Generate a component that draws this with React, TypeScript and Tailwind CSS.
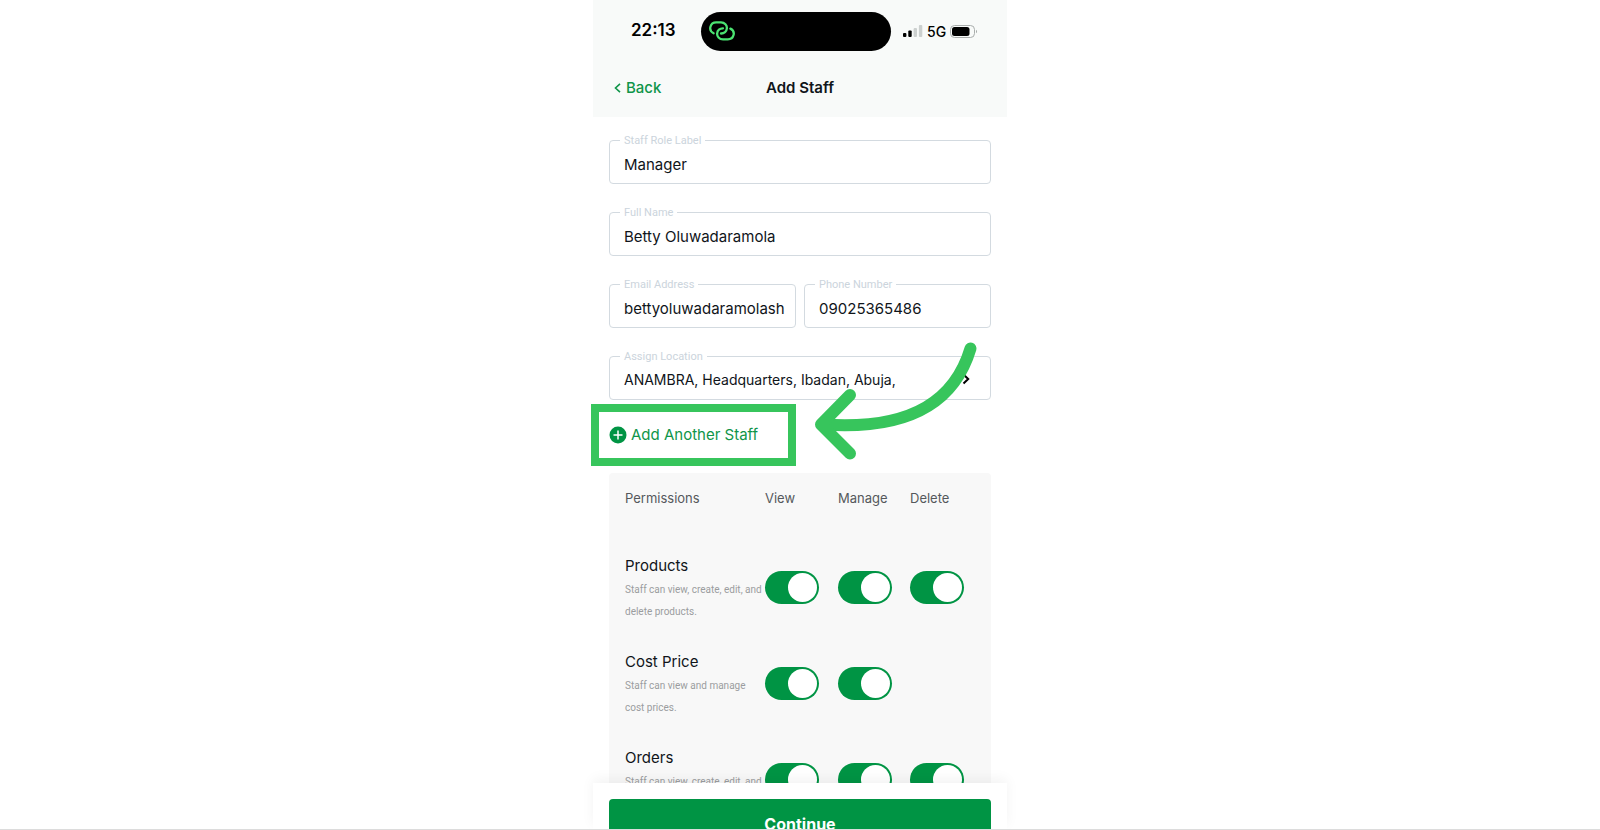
import { useState } from "react";

type Action = "View" | "Manage" | "Delete";

const ACTIONS: Action[] = ["View", "Manage", "Delete"];

const PERMISSIONS: { name: string; lines: string[]; actions: Action[] }[] = [
  { name: "Products", lines: ["Staff can view, create, edit, and", "delete products."], actions: ["View", "Manage", "Delete"] },
  { name: "Cost Price", lines: ["Staff can view and manage", "cost prices."], actions: ["View", "Manage"] },
  { name: "Orders", lines: ["Staff can view, create, edit, and"], actions: ["View", "Manage", "Delete"] },
];

const floatingLabel =
  "absolute -top-2 left-[11px] bg-white px-1 font-['Roboto','Liberation_Sans',sans-serif] text-[11px] leading-[18px] text-[#cbd4dc]";

function Field({ id, label, value, type = "text" }: { id: string; label: string; value: string; type?: string }) {
  return (
    <div className="relative min-w-0 flex-1">
      <label htmlFor={id} className={floatingLabel}>
        {label}
      </label>
      <input
        id={id}
        type={type}
        defaultValue={value}
        className="block h-11 w-full rounded border border-[#d3dae0] bg-white pt-1 pr-2 pl-[14px] text-[15px] text-[#10151a] outline-none"
      />
    </div>
  );
}

function Toggle({ label }: { label: string }) {
  const [on, setOn] = useState(true);
  return (
    <label className="relative block h-[33px] w-[54px]">
      <input
        type="checkbox"
        role="switch"
        aria-label={label}
        checked={on}
        onChange={() => setOn(!on)}
        className="peer block h-full w-full appearance-none rounded-full bg-gray-300 checked:bg-[#009444]"
      />
      <span className="pointer-events-none absolute top-[2px] left-[2px] size-[29px] rounded-full bg-white peer-checked:left-[23px]" />
    </label>
  );
}

function StatusBar() {
  return (
    <div className="flex h-[62px] items-center">
      <div className="w-[108px] pl-[38px] text-[17px] font-semibold text-black">22:13</div>
      <div className="flex h-[39px] w-[190px] items-center rounded-full bg-black pl-2">
        <svg viewBox="0 0 26 22" className="h-[22px] w-[26px]" fill="none" stroke="#4be371" strokeWidth="2.300" strokeLinecap="round">
          <path d="M4.600 13.200A6 5.700 0 0 1 7.400 2.400h4.600a6 5.400 0 0 1 5.800 6.200 5.600 5 0 0 1-5.800 4.900" />
          <path d="M21.400 8.600a6 5.700 0 0 1-2.800 10.800h-4.600a6 5.400 0 0 1-5.800-6.200 5.600 5 0 0 1 5.800-4.900" />
        </svg>
      </div>
      <div className="flex items-center gap-1 pl-3">
        <svg viewBox="0 0 20 13" className="h-[13px] w-5">
          <rect x="0" y="8" width="3.400" height="4" rx="1" fill="#000" />
          <rect x="5.300" y="5.500" width="3.400" height="6.500" rx="1" fill="#000" />
          <rect x="10.600" y="3" width="3.400" height="9" rx="1" fill="#ccd0cf" />
          <rect x="15.900" y="0" width="3.400" height="12" rx="1" fill="#ccd0cf" />
        </svg>
        <span className="text-[14px] font-medium text-black">5G</span>
        <svg viewBox="0 0 28 13" className="h-[13px] w-7">
          <rect x=".5" y=".5" width="24" height="12" rx="4" fill="none" stroke="#a9adac" />
          <rect x="2" y="2" width="17.500" height="9" rx="2.500" fill="#000" />
          <path d="M26 4.700c1.400.6 1.400 3 0 3.600z" fill="#a9adac" />
        </svg>
      </div>
    </div>
  );
}

export default function App() {
  return (
    <div className="h-screen overflow-hidden border-b border-[#dcdcdc] bg-white font-['Inter','Liberation_Sans',sans-serif]">
      <div className="mx-auto flex h-full w-full max-w-[414px] flex-col">
        <header className="shrink-0 bg-[#f8faf9] pb-[17px]">
          <StatusBar />
          <div className="mt-[14px] grid h-6 grid-cols-[1fr_auto_1fr] items-center px-[21px]">
            <a href="#back" className="flex items-center gap-[5px] text-[15px] font-medium text-[#0f9549]">
              <svg viewBox="0 0 7 10" className="h-[10px] w-[7px]" fill="none" stroke="currentColor" strokeWidth="1.600">
                <path d="M6 .8 1.500 5 6 9.200" />
              </svg>
              Back
            </a>
            <h1 className="text-[15px] font-semibold text-[#10151a]">Add Staff</h1>
          </div>
        </header>

        <main className="-mx-[2px] min-h-0 flex-1 overflow-hidden px-[18px] pt-[23px]">
          <div className="flex flex-col gap-7">
            <Field id="role" label="Staff Role Label" value="Manager" />
            <Field id="name" label="Full Name" value="Betty Oluwadaramola" />
            <div className="flex gap-2">
              <Field id="email" label="Email Address" value="bettyoluwadaramolash" />
              <Field id="phone" label="Phone Number" value="09025365486" type="tel" />
            </div>
            <div className="relative">
              <span id="location-label" className={floatingLabel}>
                Assign Location
              </span>
              <button
                type="button"
                aria-describedby="location-label"
                className="flex h-11 w-full items-center justify-between rounded border border-[#d3dae0] pt-[2px] pr-5 pl-[14px] text-left text-[14px] text-[#10151a]"
              >
                ANAMBRA, Headquarters, Ibadan, Abuja,
                <svg viewBox="0 0 8 12" className="h-3 w-2" fill="none" stroke="#000" strokeWidth="2">
                  <path d="M1.500 1.500 6.200 6 1.500 10.500" />
                </svg>
              </button>
              <svg
                viewBox="0 0 174 128"
                className="pointer-events-none absolute -top-5 right-2 z-10 h-32 w-[174px]"
                fill="none"
                stroke="#37c55c"
                strokeWidth="12"
                strokeLinecap="round"
                strokeLinejoin="round"
              >
                <path d="M161.500 12.500C147 61 107 95 14 88.500" />
                <path d="M41 59 12 88.500 41 117.500" />
              </svg>
            </div>
          </div>

          <div className="relative mt-1 mb-[7px] flex h-[62px] items-center">
            <div className="pointer-events-none absolute inset-y-0 -left-[18px] w-[205px] border-8 border-[#37c55c]" />
            <button type="button" className="flex items-center gap-1 text-[15px] text-[#0f9549]">
              <svg viewBox="0 0 18 18" className="size-[18px]">
                <circle cx="9" cy="9" r="8.500" fill="#009444" />
                <path d="M9 4.500v9M4.500 9h9" stroke="#fff" strokeWidth="1.500" />
              </svg>
              Add Another Staff
            </button>
          </div>

          <div className="rounded-sm bg-[#f8f8f8] pl-4">
            <table className="w-full table-fixed text-left">
              <colgroup>
                <col className="w-[140px]" />
                <col className="w-[73px]" />
                <col className="w-[72px]" />
                <col />
              </colgroup>
              <thead>
                <tr className="h-[54px] text-[13px] text-[#55585c]">
                  <th scope="col" className="pb-[2px] font-normal">Permissions</th>
                  {ACTIONS.map((a) => (
                    <th key={a} scope="col" className="pb-[2px] font-normal">{a}</th>
                  ))}
                </tr>
              </thead>
              <tbody>
                {PERMISSIONS.map((p) => (
                  <tr key={p.name} className="h-24 align-top">
                    <th scope="row" className="pt-7 font-normal whitespace-nowrap">
                      <div className="text-[15px] leading-[22px] text-[#10151a]">{p.name}</div>
                      <div className="pt-[2px] font-['Roboto','Liberation_Sans',sans-serif] text-[10px] leading-[22px] text-[#9b9d9f]">
                        {p.lines.map((line) => (
                          <div key={line}>{line}</div>
                        ))}
                      </div>
                    </th>
                    {ACTIONS.map((a) => (
                      <td key={a} className="pt-11">
                        {p.actions.includes(a) && <Toggle label={`${a} ${p.name}`} />}
                      </td>
                    ))}
                  </tr>
                ))}
              </tbody>
            </table>
          </div>
        </main>

        <footer className="z-10 h-[46px] shrink-0 bg-white px-4 pt-4 shadow-[0_-4px_12px_rgba(0,0,0,0.05)]">
          <button type="button" className="h-[50px] w-full rounded bg-[#009444] text-base font-bold text-white">
            Continue
          </button>
        </footer>
      </div>
    </div>
  );
}
